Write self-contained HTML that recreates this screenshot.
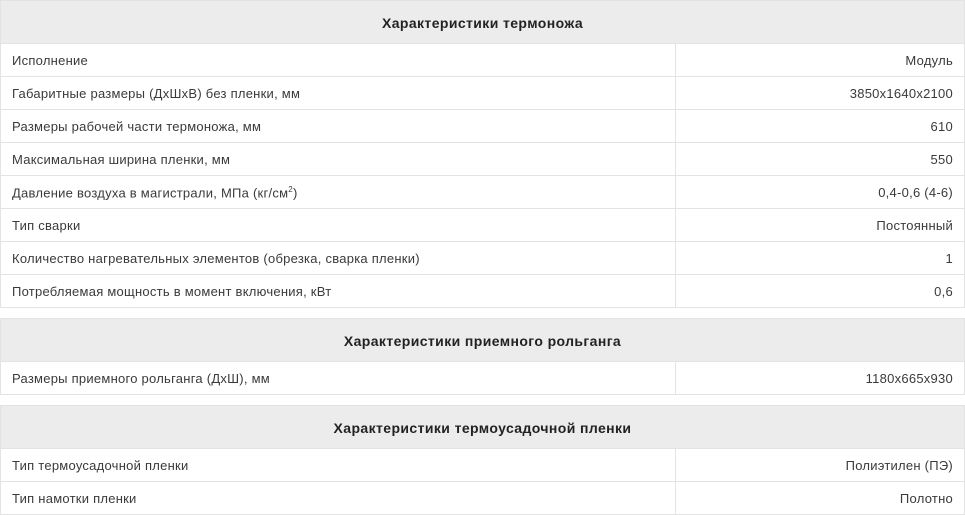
<!DOCTYPE html>
<html><head><meta charset="utf-8"><style>
body{margin:0;width:965px;height:514px;overflow:hidden;background:#fff;font-family:"Liberation Sans",sans-serif;color:#3a3a3a;}
table{position:absolute;left:0;width:965px;border-collapse:collapse;table-layout:fixed;}
td,th{border:1px solid #e3e3e3;font-size:13px;letter-spacing:0.25px;padding:1px 11px 0 11px;height:31px;}
th{background:#ececec;font-weight:bold;font-size:14px;letter-spacing:0.4px;height:41px;color:#222;}
td.r{text-align:right;}
sup{font-size:8px;}
</style></head><body>
<table style="top:0"><colgroup><col style="width:675px"><col></colgroup>
<tr><th colspan="2">Характеристики термоножа</th></tr>
<tr><td>Исполнение</td><td class="r">Модуль</td></tr>
<tr><td>Габаритные размеры (ДхШхВ) без пленки, мм</td><td class="r">3850x1640x2100</td></tr>
<tr><td>Размеры рабочей части термоножа, мм</td><td class="r">610</td></tr>
<tr><td>Максимальная ширина пленки, мм</td><td class="r">550</td></tr>
<tr><td>Давление воздуха в магистрали, МПа (кг/см<sup>2</sup>)</td><td class="r">0,4-0,6 (4-6)</td></tr>
<tr><td>Тип сварки</td><td class="r">Постоянный</td></tr>
<tr><td>Количество нагревательных элементов (обрезка, сварка пленки)</td><td class="r">1</td></tr>
<tr><td>Потребляемая мощность в момент включения, кВт</td><td class="r">0,6</td></tr>
</table>
<table style="top:318px"><colgroup><col style="width:675px"><col></colgroup>
<tr><th colspan="2">Характеристики приемного рольганга</th></tr>
<tr><td>Размеры приемного рольганга (ДхШ), мм</td><td class="r">1180x665x930</td></tr>
</table>
<table style="top:405px"><colgroup><col style="width:675px"><col></colgroup>
<tr><th colspan="2">Характеристики термоусадочной пленки</th></tr>
<tr><td>Тип термоусадочной пленки</td><td class="r">Полиэтилен (ПЭ)</td></tr>
<tr><td>Тип намотки пленки</td><td class="r">Полотно</td></tr>
</table>
</body></html>
